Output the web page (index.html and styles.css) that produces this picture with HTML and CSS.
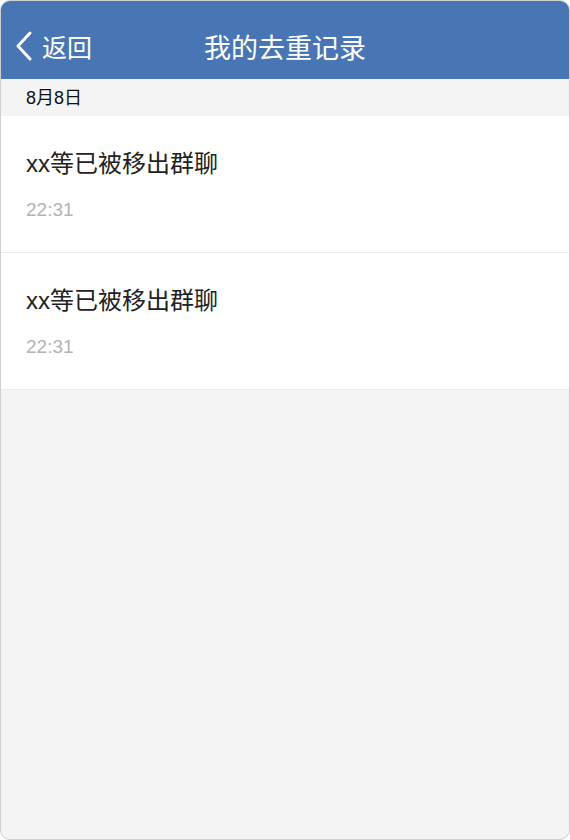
FILE: index.html
```html
<!DOCTYPE html>
<html lang="zh-CN">
<head>
    <meta charset="UTF-8">
    <meta name="viewport" content="width=device-width, initial-scale=1.0">
    <title>我的去重记录</title>
    <link rel="stylesheet" href="styles.css">
</head>
<body>
    <div class="phone">
        <header class="nav-bar">
            <a class="back" href="#">
                <svg class="back-icon" width="20" height="30" viewBox="0 0 20 30">
                    <path d="M16 2 L4 15 L16 28" fill="none" stroke="#fff" stroke-width="3" stroke-linecap="round" stroke-linejoin="round"/>
                </svg>
                <span>返回</span>
            </a>
            <h1 class="nav-title">我的去重记录</h1>
            <div></div>
        </header>

        <div class="date-bar">8月8日</div>

        <ul class="record-list">
            <li class="record">
                <div class="record-title">xx等已被移出群聊</div>
                <div class="record-time">22:31</div>
            </li>
            <li class="record">
                <div class="record-title">xx等已被移出群聊</div>
                <div class="record-time">22:31</div>
            </li>
        </ul>
    </div>
</body>
</html>
```

FILE: styles.css
```css
body {
    margin: 0;
    padding: 0;
    font-family: 'Liberation Sans', 'Noto Sans CJK SC', sans-serif;
    background-color: #fff;
}

.phone {
    width: 570px;
    height: 840px;
    box-sizing: border-box;
    border: 1px solid #cfcfcf;
    border-radius: 10px;
    overflow: hidden;
    background-color: #f4f4f4;
}

.nav-bar {
    height: 66px;
    padding-top: 12px;
    background-color: #4876b4;
    color: #fff;
    display: grid;
    grid-template-columns: 1fr auto 1fr;
    align-items: center;
}

.back {
    display: flex;
    align-items: center;
    gap: 8px;
    padding-left: 13px;
    color: #fff;
    text-decoration: none;
    font-size: 25px;
}

.back-icon {
    display: block;
}

.nav-title {
    margin: 0;
    font-size: 27px;
    font-weight: normal;
}

.date-bar {
    height: 35px;
    padding: 2px 25px 0;
    line-height: 35px;
    font-size: 18px;
    color: #111;
}

.record-list {
    list-style: none;
    margin: 0;
    padding: 0;
}

.record {
    background-color: #fff;
    padding: 32px 25px 30px;
    border-bottom: 1px solid #ececec;
}

.record-title {
    font-size: 24px;
    line-height: 32px;
    color: #222;
}

.record-time {
    margin-top: 18px;
    font-size: 19px;
    line-height: 24px;
    color: #b3b3b3;
}
```
